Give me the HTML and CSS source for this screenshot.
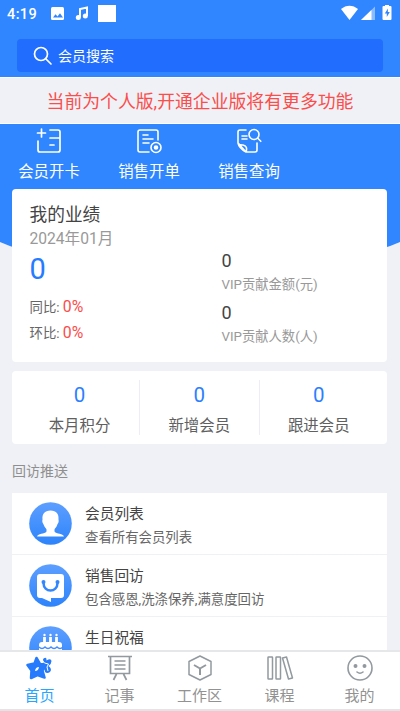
FILE: index.html
```html
<!DOCTYPE html>
<html lang="zh-CN">
<head>
<meta charset="utf-8">
<title>会员管理</title>
<link rel="stylesheet" href="styles.css">
</head>
<body>
<div class="app">
  <header class="header">
    <div class="status">
      <span class="time">4:19</span>
      <svg class="status-left" width="66" height="20" viewBox="0 0 66 20">
        <rect x="1" y="0" width="13" height="13" rx="1.500" fill="#fff"/>
        <path d="M3 10.500l2.500-3.200 2 2.200L10 6.300l3 4.200z" fill="#2f86ff"/>
        <path d="M30 10.500V2l7-1.500V9" fill="none" stroke="#fff" stroke-width="2"/>
        <circle cx="28.300" cy="10.500" r="2.500" fill="#fff"/><circle cx="35.300" cy="9" r="2.500" fill="#fff"/>
        <rect x="48" y="-2" width="18" height="17" fill="#fff"/>
      </svg>
      <svg class="status-right" width="52" height="18" viewBox="0 0 52 18">
        <path d="M0 4C5-.500 12-.500 17 4L8.500 15z" fill="#fff"/>
        <path d="M20 15L34 1.500V15z" fill="#8cbbff"/><path d="M20 15L30.500 5v10z" fill="#fff"/>
        <path d="M44 1V0h4v1h1.500q1 0 1 1v12q0 1-1 1h-7q-1 0-1-1V2q0-1 1-1z" fill="#fff"/>
        <path d="M47 3.500L43.800 8.500h2V12l3-5h-2z" fill="#2f86ff"/>
      </svg>
    </div>
    <div class="search">
      <svg width="20" height="20" viewBox="0 0 20 20" fill="none" stroke="#fff" stroke-width="1.700" stroke-linecap="round"><circle cx="8" cy="8" r="6.500"/><path d="M13 13l5 5"/></svg>
      <span>会员搜索</span>
    </div>
  </header>
  <div class="notice">当前为个人版,开通企业版将有更多功能</div>
  <main class="content">
    <svg class="curve" width="400" height="129" viewBox="0 0 400 129"><path d="M0 0H400V118Q380 127 360 129H40Q20 127 0 118z" fill="#2f86ff"/></svg>
    <nav class="shortcuts">
      <div class="shortcut">
        <svg width="26" height="26" viewBox="0 0 26 26" fill="none" stroke="#fff" stroke-width="1.700" stroke-linecap="round"><path d="M1.500 5h8M5.500 1v8M2 13v9q0 2 2 2h18q2 0 2-2v-4M14 2h8q2 0 2 2v14M14 10h10M14 17h4"/></svg>
        <span>会员开卡</span>
      </div>
      <div class="shortcut">
        <svg width="26" height="26" viewBox="0 0 26 26" fill="none" stroke="#fff" stroke-width="1.600" stroke-linecap="round"><path d="M13 24H4q-2 0-2-2V4q0-2 2-2h16q2 0 2 2v8M7 7h5M7 11h10M7 15h6"/><circle cx="20" cy="19.500" r="5"/><circle cx="20" cy="19.500" r="1.500" fill="#fff"/></svg>
        <span>销售开单</span>
      </div>
      <div class="shortcut">
        <svg width="26" height="26" viewBox="0 0 26 26" fill="none" stroke="#fff" stroke-width="1.600" stroke-linecap="round" stroke-linejoin="round"><path d="M10 2H4q-2 0-2 2v11l8 9h9q2 0 2-2v-7M2 15q1 5 8 9 2-6-3-7-4 0-5-2M6 8h5M6 11h5"/><circle cx="18" cy="6.500" r="5"/><path d="M21.800 10.300l3 3"/></svg>
        <span>销售查询</span>
      </div>
    </nav>
    <section class="card performance">
      <div class="left">
        <h2>我的业绩</h2>
        <div class="month">2024年01月</div>
        <div class="total">0</div>
        <div class="ratio">同比: <b>0%</b></div>
        <div class="ratio">环比: <b>0%</b></div>
      </div>
      <div class="right">
        <div class="num">0</div><div class="caption">VIP贡献金额(元)</div>
        <div class="num">0</div><div class="caption">VIP贡献人数(人)</div>
      </div>
    </section>
    <section class="card stats">
      <div class="stat"><b>0</b><span>本月积分</span></div>
      <div class="stat"><b>0</b><span>新增会员</span></div>
      <div class="stat"><b>0</b><span>跟进会员</span></div>
    </section>
    <h3 class="section-title">回访推送</h3>
    <section class="list">
      <div class="row">
        <svg width="43" height="43" viewBox="0 0 43 43"><defs><linearGradient id="g" x1="0" y1="0" x2="0" y2="1"><stop offset="0" stop-color="#5d9fff"/><stop offset="1" stop-color="#2d83fb"/></linearGradient></defs><circle cx="21.500" cy="21.500" r="21.300" fill="url(#g)"/><path d="M21.500 8.500c6 0 8.500 3.500 8 9 .800 3-1 4-1.500 6-.700 2-2 2.500-2.500 4v2c2 3 8.500 1.500 9.500 5H8c1-3.500 7.500-2 9.500-5v-2c-.500-1.500-1.800-2-2.500-4-.500-2-2.300-3-1.500-6-.500-5.500 2-9 8-9z" fill="#fff"/></svg>
        <div class="words"><strong>会员列表</strong><span>查看所有会员列表</span></div>
      </div>
      <div class="row">
        <svg width="43" height="43" viewBox="0 0 43 43"><circle cx="21.500" cy="21.500" r="21.300" fill="url(#g)"/><path d="M11 10h21q3 0 3 3v18q0 3-3 3H22v4l-9-4h-2q-3 0-3-3V13q0-3 3-3z" fill="#fff"/><path d="M14.500 19c0 10 14 10 14 0" fill="none" stroke="#3187fd" stroke-width="2.500"/><circle cx="14.500" cy="18" r="2" fill="#3187fd"/><circle cx="28.500" cy="18" r="2" fill="#3187fd"/></svg>
        <div class="words"><strong>销售回访</strong><span>包含感恩,洗涤保养,满意度回访</span></div>
      </div>
      <div class="row">
        <svg width="43" height="43" viewBox="0 0 43 43"><circle cx="21.500" cy="21.500" r="21.300" fill="url(#g)"/><path d="M10 34V19q0-3 3-3h17q3 0 3 3v15z" fill="#fff"/><path d="M15.500 11v6M21.500 11v6M27.500 11v6" stroke="#fff" stroke-width="2.800"/><circle cx="15.500" cy="9" r="1.200" fill="#fff"/><circle cx="21.500" cy="9" r="1.200" fill="#fff"/><circle cx="27.500" cy="9" r="1.200" fill="#fff"/><path d="M10 21q3 3 6 0 3 3 6 0 3 3 6 0 3 3 6 0" fill="none" stroke="#3f8dff" stroke-width="1.500"/></svg>
        <div class="words"><strong>生日祝福</strong></div>
      </div>
    </section>
  </main>
  <footer class="tabs">
    <div class="tab active">
      <svg width="28" height="26" viewBox="0 0 28 26"><path d="M17 4q4-3 3.500 1.500Q25 3 25.500 6q0 3-3 5 4 3 1.500 6-3 2-5 0z" fill="#267bfd"/><path d="M10.500 3l3.500 6 7 .500-4.500 6 2 7-7-2.500-6.500 3 .500-7.500L1.500 10l7-1.500z" fill="#267bfd" stroke="#267bfd" stroke-width="2.500" stroke-linejoin="round"/><path d="M16.500 5.500l2 2.500 4 1-1.500 3 1 4" fill="none" stroke="#fff" stroke-width="1"/><path d="M9 16q.500-4 4-4-.500 4-4 4z" fill="#fff"/></svg>
      <span>首页</span>
    </div>
    <div class="tab">
      <svg width="28" height="26" viewBox="0 0 28 26" fill="none" stroke="#92999f" stroke-width="1.700"><path d="M2 1.500h24M4.500 1.500v17h19v-17M8.500 6h11M8.500 10h11M8.500 14h11M10.500 19l-3 6M17.500 19l3 6"/></svg>
      <span>记事</span>
    </div>
    <div class="tab">
      <svg width="28" height="26" viewBox="0 0 28 26" fill="none" stroke="#92999f" stroke-width="1.500" stroke-linejoin="round"><path d="M14 1l11 5.500v13L14 25 3 19.500v-13z"/><path d="M8 10l6 3.500 6-3.500M14 13.500V20" stroke-width="2"/></svg>
      <span>工作区</span>
    </div>
    <div class="tab">
      <svg width="28" height="26" viewBox="0 0 28 26" fill="none" stroke="#92999f" stroke-width="1.500" stroke-linejoin="round"><rect x="2" y="2" width="4.500" height="22" rx=".5"/><rect x="10" y="2" width="4.500" height="22" rx=".5"/><path d="M16.500 3l4-1 6 21-4 1z"/></svg>
      <span>课程</span>
    </div>
    <div class="tab">
      <svg width="28" height="26" viewBox="0 0 28 26" fill="none" stroke="#92999f" stroke-width="1.600" stroke-linecap="round"><circle cx="14" cy="13" r="12"/><circle cx="9.500" cy="11" r="1.200" fill="#92999f"/><circle cx="18.500" cy="11" r="1.200" fill="#92999f"/><path d="M11 17q3 2.500 6 0"/></svg>
      <span>我的</span>
    </div>
  </footer>
</div>
</body>
</html>
```
FILE: styles.css
```css
* { box-sizing: border-box; }
body { margin: 0; font-family: Roboto, "Noto Sans CJK SC", sans-serif; color: #444; background: #eff1f6; }
h2, h3 { margin: 0; font-weight: 400; }
b, strong { font-weight: 400; }
svg { display: block; flex: none; }
.app { width: 400px; height: 711px; display: flex; flex-direction: column; overflow: hidden; }
.header { height: 77px; flex: none; background: #2f86ff; color: #fff; }
.status { height: 39px; padding: 5px 7px 0 7px; display: flex; align-items: flex-start; }
.time { width: 43px; font-size: 14.5px; line-height: 19px; font-weight: 500; letter-spacing: .4px; }
.status-left { margin-top: 2px; overflow: visible; }
.status-right { margin-left: auto; }
.search { height: 33px; margin: 0 17px; padding-left: 16px; display: flex; align-items: center; gap: 5px; border-radius: 4px; background: #216dfe; font-size: 14px; line-height: 20px; }
.notice { height: 47px; flex: none; border-top: 1px solid #fff; border-bottom: 1px solid #fff; text-align: center; color: #fc4d4b; font-size: 17.85px; line-height: 48px; white-space: nowrap; }
.content { position: relative; flex: 1; min-height: 0; overflow: hidden; padding: 0 13px 0 12px; }
.curve { position: absolute; top: 0; left: 0; }
.shortcuts { position: relative; height: 65px; margin-left: -13px; display: flex; color: #fff; }
.shortcut { width: 100px; padding-top: 4px; display: flex; flex-direction: column; align-items: center; font-size: 15.4px; line-height: 24px; gap: 6px; }
.card { position: relative; background: #fff; border-radius: 4px; display: flex; }
.performance { height: 173px; padding-left: 17.5px; }
.left { width: 192px; padding-top: 14px; }
.left h2 { font-size: 17.7px; line-height: 25px; }
.month { color: #999; font-size: 15.6px; line-height: 22px; }
.total { color: #267bff; font-size: 29px; line-height: 38px; }
.ratio { font-size: 13.4px; line-height: 26px; color: #666; margin-top: 7px; white-space: nowrap; }
.ratio + .ratio { margin-top: 0; }
.ratio b { font-size: 15.8px; color: #fc4d4b; line-height: 20px; }
.right { padding-top: 60px; }
.num { font-size: 18px; line-height: 24px; }
.caption { font-size: 13.3px; line-height: 23px; margin-bottom: 5px; color: #999; white-space: nowrap; }
.stats { margin-top: 9px; height: 73px; padding: 9px 0; }
.stat { width: 119.5px; display: flex; flex-direction: column; align-items: center; border-right: 1px solid #eceef4; color: #606060; }
.stat:first-child { width: 128px; padding: 0 8px 0 16px; }
.stat:last-child { border: 0; padding-right: 1px; }
.stat b { color: #2c80ff; font-size: 20.5px; line-height: 30px; }
.stat span { font-size: 15.4px; line-height: 33px; }
.section-title { height: 49px; padding-top: 5px; color: #8f8f8f; font-size: 14px; line-height: 44px; }
.list { background: #fff; }
.row { height: 62px; padding: 9px 0 0 17px; display: flex; align-items: flex-start; gap: 13px; border-bottom: 1px solid #eff1f5; }
.words { display: flex; flex-direction: column; padding-top: 1px; }
.words strong { font-size: 14.7px; line-height: 22px; }
.words span { color: #666; font-size: 13.4px; line-height: 26px; }
.tabs { height: 61px; flex: none; display: flex; background: #fff; border-top: 2px solid #e6e7e9; border-bottom: 2px solid #e3e4e6; }
.tab { width: 80px; padding: 3px 1px 0 0; display: flex; flex-direction: column; align-items: center; color: #929292; font-size: 15px; line-height: 30px; }
.active { color: #28a5ff; }
```
